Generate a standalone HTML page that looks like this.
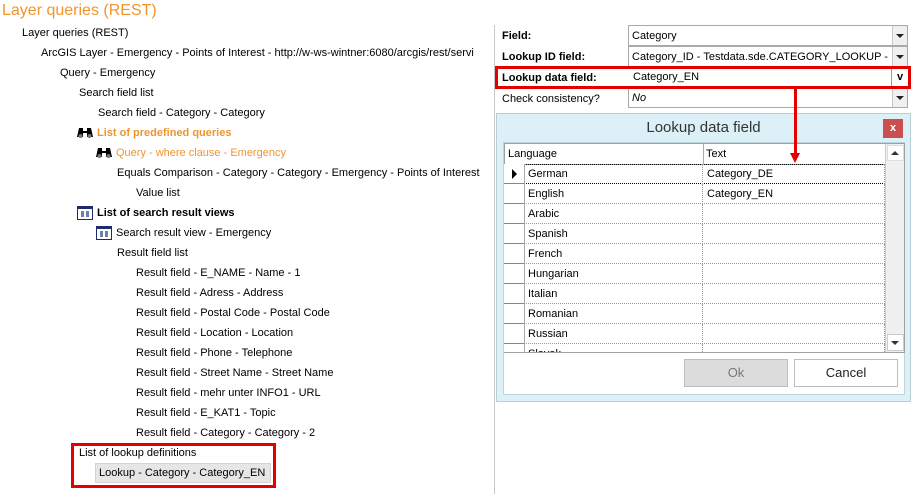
<!DOCTYPE html>
<html><head><meta charset="utf-8"><style>
*{margin:0;padding:0;box-sizing:border-box}
body{width:913px;height:494px;background:#fff;position:relative;overflow:hidden;font-family:"Liberation Sans",sans-serif;font-size:11px;color:#000}
.a{position:absolute;white-space:nowrap}
.t{position:absolute;white-space:nowrap;line-height:14px}
.or{color:#f0952e}
.b{font-weight:bold}
.bino{position:absolute;width:16px;height:12px}
.tbl{position:absolute;width:16px;height:14px;border:1.5px solid #1d2a6b;background:#fff}
.tbl:before{content:"";position:absolute;left:0;right:0;top:0;height:2px;background:#1d2a6b}
.tbl:after{content:"";position:absolute;left:3px;top:4px;width:3px;height:6px;background:#6d7fb0;box-shadow:5px 0 0 #6d7fb0}
.combo{position:absolute;left:628px;width:280px;height:21px;border:1px solid #a9a9a9;background:#fff;padding-left:3px;line-height:20px}
.dd{position:absolute;right:0;top:0;width:15px;height:19px;border-left:1px solid #c8c8c8;background:#f0f0f0}
.dd:after{content:"";position:absolute;left:3px;top:8px;border-left:4px solid transparent;border-right:4px solid transparent;border-top:4px solid #222}
.lbl{position:absolute;left:502px;line-height:20px;top:0}
.row{position:absolute;left:504px;width:381px;height:20px;border-bottom:1px dotted #999}
.row .c1{position:absolute;left:0;top:0;width:21px;height:20px;border-right:1px solid #aaa;border-bottom:1px solid #888;background:#fff}
.row .c2{position:absolute;left:21px;top:0;width:178px;height:20px;border-right:1px dotted #999;padding-left:3px;line-height:21px}
.row .c3{position:absolute;left:199px;top:0;width:182px;height:20px;border-right:1px dotted #999;padding-left:4px;line-height:21px}
</style></head><body>
<div class="a or" style="left:2px;top:2px;font-size:16px">Layer queries (REST)</div>
<div class="t" style="left:22px;top:26px">Layer queries (REST)</div>
<div class="t" style="left:41px;top:46px;width:440px;overflow:hidden">ArcGIS Layer - Emergency - Points of Interest - http://w-ws-wintner:6080/arcgis/rest/servi</div>
<div class="t" style="left:60px;top:66px">Query - Emergency</div>
<div class="t" style="left:79px;top:86px">Search field list</div>
<div class="t" style="left:98px;top:106px">Search field - Category - Category</div>
<svg class="bino" style="left:77px;top:127px" viewBox="0 0 16 12"><path d="M2 1h4v3h4V1h4l2 9h-6V6H6v4H0z" fill="#000"/><circle cx="3.5" cy="9" r="2" fill="#777"/><circle cx="12.5" cy="9" r="2" fill="#777"/></svg>
<div class="t or b" style="left:97px;top:126px">List of predefined queries</div>
<svg class="bino" style="left:96px;top:147px" viewBox="0 0 16 12"><path d="M2 1h4v3h4V1h4l2 9h-6V6H6v4H0z" fill="#000"/><circle cx="3.5" cy="9" r="2" fill="#777"/><circle cx="12.5" cy="9" r="2" fill="#777"/></svg>
<div class="t or" style="left:116px;top:146px">Query - where clause - Emergency</div>
<div class="t" style="left:117px;top:166px;width:371px;overflow:hidden">Equals Comparison - Category - Category - Emergency - Points of Interest</div>
<div class="t" style="left:136px;top:186px">Value list</div>
<div class="tbl" style="left:77px;top:206px"></div>
<div class="t b" style="left:97px;top:206px">List of search result views</div>
<div class="tbl" style="left:96px;top:226px"></div>
<div class="t" style="left:116px;top:226px">Search result view - Emergency</div>
<div class="t" style="left:117px;top:246px">Result field list</div>
<div class="t" style="left:136px;top:266px">Result field - E_NAME - Name - 1</div>
<div class="t" style="left:136px;top:286px">Result field - Adress - Address</div>
<div class="t" style="left:136px;top:306px">Result field - Postal Code - Postal Code</div>
<div class="t" style="left:136px;top:326px">Result field - Location - Location</div>
<div class="t" style="left:136px;top:346px">Result field - Phone - Telephone</div>
<div class="t" style="left:136px;top:366px">Result field - Street Name - Street Name</div>
<div class="t" style="left:136px;top:386px">Result field - mehr unter INFO1 - URL</div>
<div class="t" style="left:136px;top:406px">Result field - E_KAT1 - Topic</div>
<div class="t" style="left:136px;top:426px">Result field - Category - Category - 2</div>
<div class="t" style="left:79px;top:446px">List of lookup definitions</div>
<div class="a" style="left:95px;top:463px;width:176px;height:20px;background:#e6e6e6;border:1px solid #d4d4d4;line-height:18px;padding-left:3px">Lookup - Category - Category_EN</div>
<div class="a" style="left:71px;top:443px;width:205px;height:45px;border:3px solid #e50000"></div>

<div class="a" style="left:494px;top:25px;width:1px;height:469px;background:#c8c8c8"></div>

<div class="lbl b" style="top:26px">Field:</div>
<div class="lbl b" style="top:47px">Lookup ID field:</div>
<div class="lbl b" style="top:68px">Lookup data field:</div>
<div class="lbl" style="top:89px">Check consistency?</div>
<div class="combo" style="top:25px">Category<div class="dd"></div></div>
<div class="combo" style="top:46px"><span style="display:block;width:258px;overflow:hidden">Category_ID - Testdata.sde.CATEGORY_LOOKUP - C</span><div class="dd"></div></div>
<div class="combo" style="top:67px;border:none;padding-left:5px;line-height:21px">Category_EN<div style="position:absolute;right:0;top:0;width:17px;height:20px;border-left:1px solid #999;font-weight:bold;text-align:center;line-height:20px">v</div></div>
<div class="combo" style="top:87px;font-style:italic">No<div class="dd"></div></div>
<div class="a" style="left:495px;top:66px;width:416px;height:23px;border:3px solid #e50000"></div>

<div class="a" style="left:496px;top:113px;width:415px;height:289px;background:#dcf0f8;border:1px solid #b8cfd8"></div>
<div class="a" style="left:496px;top:119px;width:415px;text-align:center;font-size:15px;color:#333">Lookup data field</div>
<div class="a" style="left:883px;top:119px;width:20px;height:19px;background:#c9504f;color:#fff;text-align:center;font-size:11px;font-weight:bold;line-height:18px">x</div>
<div class="a" style="left:503px;top:142px;width:402px;height:253px;background:#fff;border:1px solid #c0d4dc"></div>
<div class="a" style="left:504px;top:143px;width:401px;height:210px;border:1px solid #a0a0a0;overflow:hidden;background:#fff">
 <div class="a" style="left:0;top:0;width:381px;height:21px;border-bottom:1px solid #999"></div>
 <div class="a" style="left:3px;top:4px">Language</div>
 <div class="a" style="left:198px;top:0;width:1px;height:21px;background:#aaa"></div>
 <div class="a" style="left:201px;top:4px">Text</div>
 <div class="a" style="left:380px;top:0;width:20px;height:210px;background:#f0f0f0;border-left:1px solid #ccc"></div>
 <div class="a" style="left:382px;top:1px;width:17px;height:16px;background:#fff;border:1px solid #ddd"></div>
 <div class="a" style="left:386px;top:7px;border-left:4px solid transparent;border-right:4px solid transparent;border-bottom:4px solid #333"></div>
 <div class="a" style="left:382px;top:190px;width:17px;height:17px;background:#fff;border:1px solid #ccc"></div>
 <div class="a" style="left:386px;top:197px;border-left:4px solid transparent;border-right:4px solid transparent;border-top:4px solid #333"></div>
</div>
<div class="row" style="top:164px;border:1px dotted #000;border-left:none"><div class="c1" style="top:-1px;height:20px"><span style="position:absolute;left:8px;top:5px;border-top:5px solid transparent;border-bottom:5px solid transparent;border-left:5px solid #000"></span></div><div class="c2" style="top:-1px">German</div><div class="c3" style="top:-1px">Category_DE</div></div>
<div class="row" style="top:184px"><div class="c1"></div><div class="c2">English</div><div class="c3">Category_EN</div></div>
<div class="row" style="top:204px"><div class="c1"></div><div class="c2">Arabic</div><div class="c3"></div></div>
<div class="row" style="top:224px"><div class="c1"></div><div class="c2">Spanish</div><div class="c3"></div></div>
<div class="row" style="top:244px"><div class="c1"></div><div class="c2">French</div><div class="c3"></div></div>
<div class="row" style="top:264px"><div class="c1"></div><div class="c2">Hungarian</div><div class="c3"></div></div>
<div class="row" style="top:284px"><div class="c1"></div><div class="c2">Italian</div><div class="c3"></div></div>
<div class="row" style="top:304px"><div class="c1"></div><div class="c2">Romanian</div><div class="c3"></div></div>
<div class="row" style="top:324px"><div class="c1"></div><div class="c2">Russian</div><div class="c3"></div></div>
<div class="row" style="top:344px;height:8px;overflow:hidden;border:none"><div class="c1"></div><div class="c2">Slovak</div><div class="c3"></div></div>
<div class="a" style="left:504px;top:352px;width:401px;height:1px;background:#a0a0a0"></div>
<div class="a" style="left:684px;top:359px;width:104px;height:28px;background:#dcdcdc;border:1px solid #bdbdbd;text-align:center;line-height:26px;font-size:13px;color:#777">Ok</div>
<div class="a" style="left:794px;top:359px;width:104px;height:28px;background:#fff;border:1px solid #bdbdbd;text-align:center;line-height:26px;font-size:13px;color:#222">Cancel</div>

<div class="a" style="left:794px;top:88px;width:3px;height:67px;background:#e50000"></div>
<div class="a" style="left:790px;top:153px;border-left:5.5px solid transparent;border-right:5.5px solid transparent;border-top:10px solid #e50000"></div>
</body></html>
